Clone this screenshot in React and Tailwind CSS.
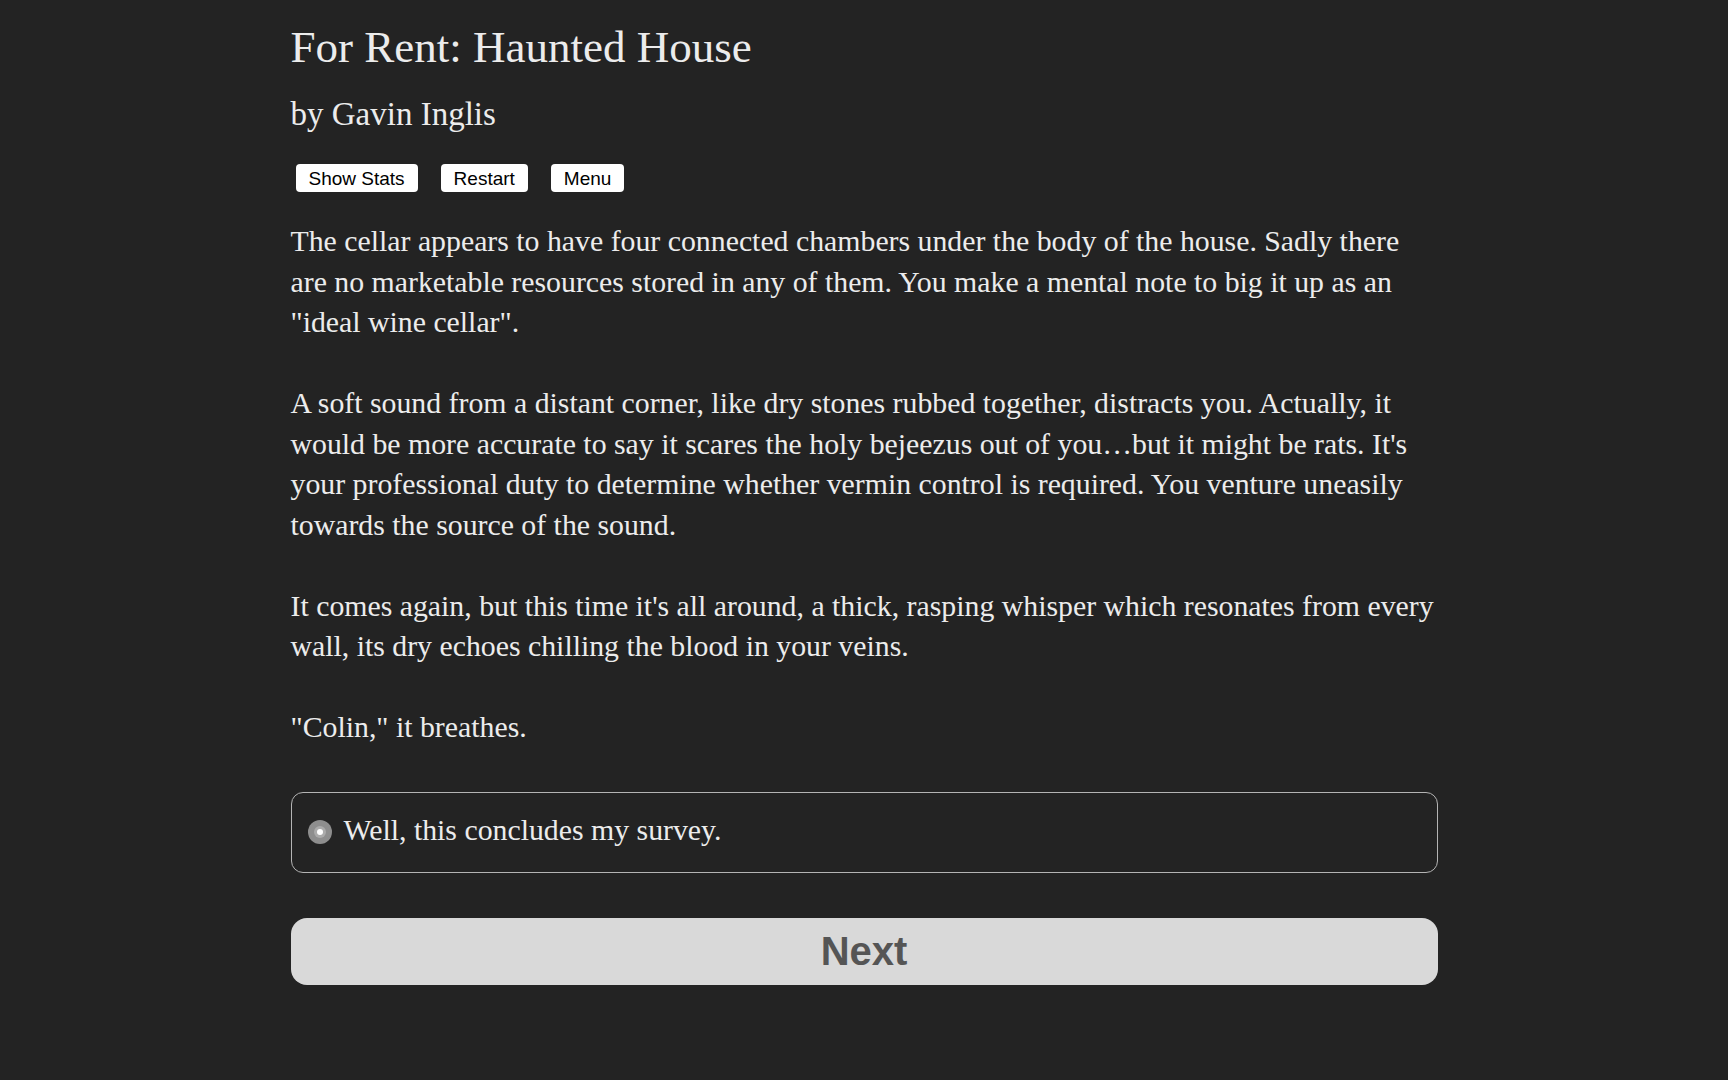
import { useState } from "react";

const passages = [
  `The cellar appears to have four connected chambers under the body of the house. Sadly there are no marketable resources stored in any of them. You make a mental note to big it up as an "ideal wine cellar".`,
  `A soft sound from a distant corner, like dry stones rubbed together, distracts you. Actually, it would be more accurate to say it scares the holy bejeezus out of you…but it might be rats. It's your professional duty to determine whether vermin control is required. You venture uneasily towards the source of the sound.`,
  `It comes again, but this time it's all around, a thick, rasping whisper which resonates from every wall, its dry echoes chilling the blood in your veins.`,
  `"Colin," it breathes.`,
];

function TopButton({ children }) {
  return (
    <button className="h-[28px] px-[13px] bg-white text-black rounded-[4px] text-[19px] leading-none font-['Liberation_Sans',Arial,sans-serif]">
      {children}
    </button>
  );
}

export default function App() {
  const [picked, setPicked] = useState(true);

  return (
    <div className="min-h-screen bg-[#232323] text-[#ececec] font-['Liberation_Serif','Times_New_Roman',serif]">
      <div className="max-w-[1147px] mx-auto pt-5 pb-24">
        <h1 className="text-[45px] leading-[54px] font-normal">For Rent: Haunted House</h1>
        <h2 className="mt-5 text-[33px] leading-[40px] font-normal">by Gavin Inglis</h2>

        <div className="mt-[30px] ml-[5px] flex gap-[23px]">
          <TopButton>Show Stats</TopButton>
          <TopButton>Restart</TopButton>
          <TopButton>Menu</TopButton>
        </div>

        <div className="mt-[29px] text-[29.8px] leading-[40.5px] space-y-[40.5px]">
          {passages.map((p, i) => (
            <p key={i}>{p}</p>
          ))}
        </div>

        <label
          onClick={() => setPicked(true)}
          className="mt-[44px] h-[81px] flex items-center gap-3 px-4 border-[1.5px] border-[#b4b4b4] rounded-[12px] cursor-pointer"
        >
          <span className="w-6 h-6 rounded-full bg-[#8e8e8e] flex items-center justify-center shrink-0">
            {picked && (
              <span className="w-3 h-3 rounded-full bg-[#ababab] flex items-center justify-center">
                <span className="w-[6px] h-[6px] rounded-full bg-white" />
              </span>
            )}
          </span>
          <span className="text-[29.8px] -mt-1">Well, this concludes my survey.</span>
        </label>

        <button className="mt-[45px] w-full h-[67px] rounded-[16px] bg-[#d9d9d9] text-[#555555] text-[40px] font-bold font-['Liberation_Sans',Arial,sans-serif]">
          Next
        </button>
      </div>
    </div>
  );
}
